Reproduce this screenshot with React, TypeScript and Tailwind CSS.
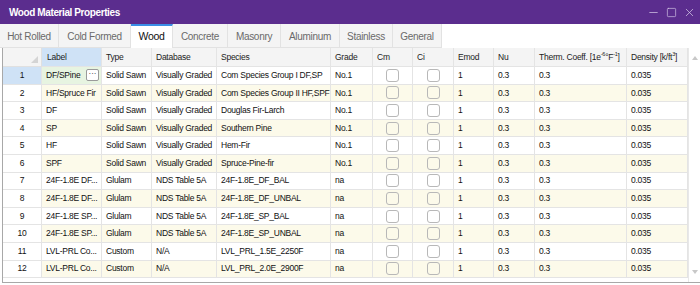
import { Minus, Square, X } from "lucide-react";

const tabs = ["Hot Rolled", "Cold Formed", "Wood", "Concrete", "Masonry", "Aluminum", "Stainless", "General"];
const tabWidths = ["w-[59px]", "w-[72px]", "w-[42px]", "w-[55px]", "w-[53px]", "w-[59px]", "w-[53px]", "w-[49px]"];

const cols = "grid grid-cols-[39px_60px_50px_65px_114px_42px_40px_41px_40px_41px_92px_61px]";

const rows = [
  ["DF/SPine", "Solid Sawn", "Visually Graded", "Com Species Group I DF,SP", "No.1"],
  ["HF/Spruce Fir", "Solid Sawn", "Visually Graded", "Com Species Group II HF,SPF", "No.1"],
  ["DF", "Solid Sawn", "Visually Graded", "Douglas Fir-Larch", "No.1"],
  ["SP", "Solid Sawn", "Visually Graded", "Southern Pine", "No.1"],
  ["HF", "Solid Sawn", "Visually Graded", "Hem-Fir", "No.1"],
  ["SPF", "Solid Sawn", "Visually Graded", "Spruce-Pine-fir", "No.1"],
  ["24F-1.8E DF...", "Glulam", "NDS Table 5A", "24F-1.8E_DF_BAL", "na"],
  ["24F-1.8E DF...", "Glulam", "NDS Table 5A", "24F-1.8E_DF_UNBAL", "na"],
  ["24F-1.8E SP...", "Glulam", "NDS Table 5A", "24F-1.8E_SP_BAL", "na"],
  ["24F-1.8E SP...", "Glulam", "NDS Table 5A", "24F-1.8E_SP_UNBAL", "na"],
  ["LVL-PRL Co...", "Custom", "N/A", "LVL_PRL_1.5E_2250F", "na"],
  ["LVL-PRL Co...", "Custom", "N/A", "LVL_PRL_2.0E_2900F", "na"],
];

function Cell({ children, className = "" }: { children?: React.ReactNode; className?: string }) {
  return (
    <div className={`flex items-center overflow-hidden whitespace-nowrap border-r border-b border-[#e4e4e4] pl-[4px] ${className}`}>
      {children}
    </div>
  );
}

function Check() {
  return (
    <div className="flex items-center justify-center border-r border-b border-[#e4e4e4]">
      <span className="h-[13px] w-[13px] rounded-[3px] border border-[#b8b8b8]" />
    </div>
  );
}

export default function App() {
  return (
    <div className="h-[285px] w-[700px] overflow-hidden bg-white font-['Liberation_Sans',Arial,sans-serif] text-[8.5px] tracking-[-0.25px] text-[#111]">
      <div className="flex h-[24px] items-center bg-[#5b2d8e] pl-[9px] pr-[4px] text-white">
        <span className="text-[10px] font-bold tracking-[-0.4px]">Wood Material Properties</span>
        <div className="ml-auto flex items-center gap-[6px] text-[#d9cdea]">
          <Minus size={13} strokeWidth={1.3} />
          <Square size={11} strokeWidth={1.4} />
          <X size={13} strokeWidth={1.3} />
        </div>
      </div>

      <div className="flex h-[24px] bg-white tracking-[-0.3px]">
        {tabs.map((t, i) => (
          <div
            key={t}
            className={`flex items-center justify-center border-r border-[#e2e2e2] ${tabWidths[i]} ${
              t === "Wood"
                ? "border-t-2 border-t-[#3a8ee6] bg-white text-[10.5px] text-[#111]"
                : "border-b border-b-[#e2e2e2] bg-[#f4f4f4] pt-[1px] text-[10px] text-[#6a6a6a]"
            }`}
          >
            {t}
          </div>
        ))}
        <div className="flex-1" />
      </div>

      <div className="ml-[2px] flex h-[235px] border-b border-l border-[#a8a8a8]">
        <div className="w-[686px]">
          <div className={`${cols} h-[19px] bg-[#f4f4f4] text-[#222]`}>
            <div className="relative border-r border-b border-[#e0e0e0]">
              <span className="absolute right-[3px] bottom-[3px] h-0 w-0 border-b-[7px] border-l-[7px] border-b-[#d4d4d4] border-l-transparent" />
            </div>
            <Cell className="bg-[#cfe2f6] pl-[5px]">Label</Cell>
            <Cell>Type</Cell>
            <Cell>Database</Cell>
            <Cell>Species</Cell>
            <Cell>Grade</Cell>
            <Cell>Cm</Cell>
            <Cell>Ci</Cell>
            <Cell>Emod</Cell>
            <Cell>Nu</Cell>
            <Cell>
              Therm. Coeff. [1e<sup className="text-[5.5px]">-6</sup>°F<sup className="text-[5.5px]">-1</sup>]
            </Cell>
            <Cell>
              Density [k/ft<sup className="text-[5.5px]">3</sup>]
            </Cell>
          </div>
          {rows.map((r, i) => (
            <div key={i} className={`${cols} h-[17.6px] ${i % 2 ? "bg-[#fcfaea]" : "bg-white"}`}>
              <div
                className={`flex items-center justify-center border-r border-b border-[#e4e4e4] ${
                  i === 0 ? "bg-[#cfe2f6]" : "bg-white"
                }`}
              >
                {i + 1}
              </div>
              {i === 0 ? (
                <Cell className="bg-[#e7f4e1] pr-[2px]">
                  <span className="flex-1">{r[0]}</span>
                  <span className="flex h-[12px] w-[13px] items-center justify-center rounded-[2px] border border-[#9a9a9a] bg-white pb-[3px] text-[8px] leading-none tracking-normal">
                    ···
                  </span>
                </Cell>
              ) : (
                <Cell>{r[0]}</Cell>
              )}
              <Cell>{r[1]}</Cell>
              <Cell>{r[2]}</Cell>
              <Cell>{r[3]}</Cell>
              <Cell>{r[4]}</Cell>
              <Check />
              <Check />
              <Cell>1</Cell>
              <Cell>0.3</Cell>
              <Cell>0.3</Cell>
              <Cell>0.035</Cell>
            </div>
          ))}
        </div>
        <div className="flex w-[12px] flex-col items-center justify-between border-l border-[#e8e8e8] py-[8px]">
          <span className="h-0 w-0 border-x-[3px] border-b-[4px] border-x-transparent border-b-[#c8c8c8]" />
          <span className="h-0 w-0 border-x-[3px] border-t-[4px] border-x-transparent border-t-[#c8c8c8]" />
        </div>
      </div>
    </div>
  );
}
